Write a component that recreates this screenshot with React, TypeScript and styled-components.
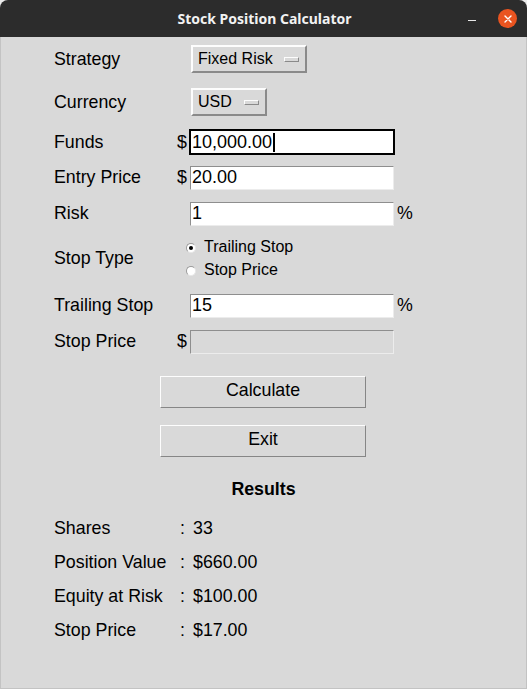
import { Fragment } from "react";
import styled, { createGlobalStyle } from "styled-components";

const GlobalStyle = createGlobalStyle`
  html, body {
    margin: 0;
    padding: 0;
    background: #ebebeb;
  }
  * {
    box-sizing: border-box;
  }
`;

const Window = styled.div`
  width: 527px;
  height: 689px;
  display: flex;
  flex-direction: column;
  border-radius: 8px 8px 0 0;
  overflow: hidden;
  font-family: "Liberation Sans", Arial, sans-serif;
  font-size: 17.8px;
  color: #000;
`;

const TitleBar = styled.div`
  height: 37px;
  flex: none;
  background: #2c2c2c;
  display: grid;
  grid-template-columns: 1fr auto 1fr;
  align-items: center;
`;

const Title = styled.div`
  grid-column: 2;
  font-family: "Noto Sans", "DejaVu Sans", sans-serif;
  font-weight: 700;
  font-size: 14px;
  color: #f2f2f2;
  padding-left: 2px;
`;

const Controls = styled.div`
  grid-column: 3;
  justify-self: end;
  display: flex;
  align-items: center;
  gap: 22px;
  padding-right: 10px;
`;

const Minimize = styled.div`
  width: 8px;
  height: 1.5px;
  margin-top: 4px;
  background: #e8e8e8;
`;

const Close = styled.div`
  width: 19px;
  height: 19px;
  border-radius: 50%;
  background: #e95420;
  display: flex;
  align-items: center;
  justify-content: center;
`;

const Body = styled.div`
  flex: 1;
  background: #d9d9d9;
  border: 1px solid #c3c3c3;
  border-top: none;
  display: flex;
  flex-direction: column;
`;

const Form = styled.div`
  display: flex;
  flex-direction: column;
  padding-left: 53px;
`;

const Row = styled.div<{ h: number }>`
  height: ${({ h }) => h}px;
  display: grid;
  grid-template-columns: 123px 12px 206px auto;
  align-items: center;
`;

const Label = styled.div`
  grid-column: 1;
`;

const Prefix = styled.div`
  grid-column: 2;
`;

const Suffix = styled.div`
  grid-column: 4;
  margin-left: 2px;
`;

const MenuButton = styled.div<{ w: number }>`
  grid-column: 3;
  margin-left: 2px;
  width: ${({ w }) => w}px;
  height: 28px;
  display: flex;
  align-items: center;
  justify-content: space-between;
  padding: 0 6px 0 5px;
  border: 2px solid;
  border-color: #fdfdfd #8a8a8a #8a8a8a #fdfdfd;
  background: #d9d9d9;
  font-size: 16px;
`;

const Indicator = styled.span`
  width: 15px;
  height: 5px;
  border: 1px solid;
  border-color: #fdfdfd #8a8a8a #8a8a8a #fdfdfd;
  margin-top: 1px;
`;

const Field = styled.div<{ focused?: boolean; disabled?: boolean }>`
  grid-column: 3;
  height: 26px;
  padding: 1px;
  font-size: 18px;
  background: ${({ focused }) => (focused ? "#000" : "transparent")};
  & > div {
    height: 100%;
    display: flex;
    align-items: center;
    padding-left: 1px;
    background: ${({ disabled }) => (disabled ? "#d9d9d9" : "#fff")};
    border: 1px solid;
    border-color: ${({ focused }) =>
      focused ? "#000" : "#8e8e8e #ececec #ececec #8e8e8e"};
  }
`;

const Caret = styled.span`
  width: 2px;
  height: 19px;
  background: #000;
  margin-left: 1px;
`;

const RadioGroup = styled.div`
  grid-column: 3;
  margin-left: -3px;
  display: flex;
  flex-direction: column;
  gap: 3px;
`;

const RadioOption = styled.div`
  display: flex;
  align-items: center;
  height: 20px;
  gap: 8px;
  font-size: 16px;
`;

const RadioDot = styled.span<{ checked?: boolean }>`
  width: 10px;
  height: 10px;
  border-radius: 50%;
  background: #fff;
  border: 1px solid;
  border-color: #9a9a9a #e6e6e6 #e6e6e6 #9a9a9a;
  display: flex;
  align-items: center;
  justify-content: center;
  margin-top: 2px;
  &::after {
    content: "";
    width: 4px;
    height: 4px;
    border-radius: 50%;
    background: ${({ checked }) => (checked ? "#000" : "transparent")};
  }
`;

const Actions = styled.div`
  display: flex;
  flex-direction: column;
  align-items: center;
  gap: 17px;
  margin-top: 21px;
`;

const Button = styled.button`
  width: 206px;
  height: 32px;
  margin-left: -1px;
  background: #d9d9d9;
  border: 1px solid;
  border-color: #fdfdfd #868686 #868686 #fdfdfd;
  font-family: inherit;
  font-size: 17.8px;
  color: #000;
  padding: 0 0 4px;
`;

const ResultsTitle = styled.div`
  margin-top: 22px;
  height: 20px;
  text-align: center;
  font-weight: 700;
  line-height: 20px;
`;

const Results = styled.div`
  margin-top: 12px;
  padding-left: 53px;
  display: grid;
  grid-template-columns: 123px 16px auto;
  grid-auto-rows: 34px;
  align-items: center;
`;

const Colon = styled.div`
  padding-left: 3px;
`;

const results = [
  ["Shares", "33"],
  ["Position Value", "$660.00"],
  ["Equity at Risk", "$100.00"],
  ["Stop Price", "$17.00"],
];

export default function App() {
  return (
    <>
      <GlobalStyle />
      <Window>
        <TitleBar>
          <Title>Stock Position Calculator</Title>
          <Controls>
            <Minimize />
            <Close>
              <svg width="8" height="8" viewBox="0 0 8 8">
                <path d="M1 1L7 7M7 1L1 7" stroke="#fff" strokeWidth="1.4" strokeLinecap="round" />
              </svg>
            </Close>
          </Controls>
        </TitleBar>
        <Body>
          <Form>
            <Row h={44}>
              <Label>Strategy</Label>
              <MenuButton w={116}>
                Fixed Risk <Indicator />
              </MenuButton>
            </Row>
            <Row h={42}>
              <Label>Currency</Label>
              <MenuButton w={76}>
                USD <Indicator />
              </MenuButton>
            </Row>
            <Row h={38}>
              <Label>Funds</Label>
              <Prefix>$</Prefix>
              <Field focused>
                <div>
                  10,000.00
                  <Caret />
                </div>
              </Field>
            </Row>
            <Row h={33}>
              <Label>Entry Price</Label>
              <Prefix>$</Prefix>
              <Field>
                <div>20.00</div>
              </Field>
            </Row>
            <Row h={39}>
              <Label>Risk</Label>
              <Field>
                <div>1</div>
              </Field>
              <Suffix>%</Suffix>
            </Row>
            <Row h={50}>
              <Label>Stop Type</Label>
              <RadioGroup>
                <RadioOption>
                  <RadioDot checked />
                  Trailing Stop
                </RadioOption>
                <RadioOption>
                  <RadioDot />
                  Stop Price
                </RadioOption>
              </RadioGroup>
            </Row>
            <Row h={45}>
              <Label>Trailing Stop</Label>
              <Field>
                <div>15</div>
              </Field>
              <Suffix>%</Suffix>
            </Row>
            <Row h={27}>
              <Label>Stop Price</Label>
              <Prefix>$</Prefix>
              <Field disabled>
                <div />
              </Field>
            </Row>
          </Form>
          <Actions>
            <Button>Calculate</Button>
            <Button>Exit</Button>
          </Actions>
          <ResultsTitle>Results</ResultsTitle>
          <Results>
            {results.map(([label, value]) => (
              <Fragment key={label}>
                <div>{label}</div>
                <Colon>:</Colon>
                <div>{value}</div>
              </Fragment>
            ))}
          </Results>
        </Body>
      </Window>
    </>
  );
}
